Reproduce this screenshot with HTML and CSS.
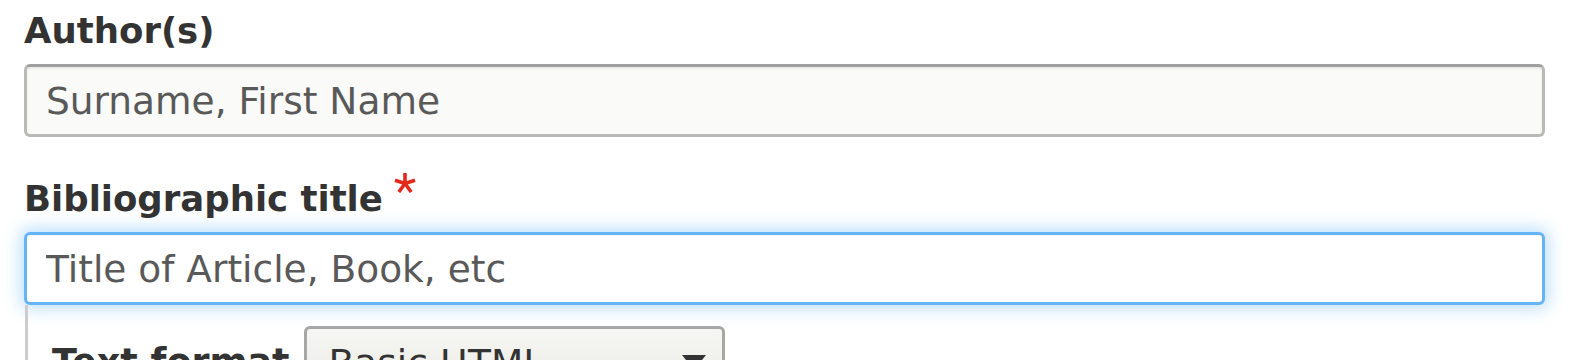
FILE: index.html
```html
<!DOCTYPE html>
<html lang="en">
<head>
<meta charset="utf-8">
<title>Bibliographic form</title>
<link rel="stylesheet" href="styles.css">
</head>
<body>
<form class="form">
  <div class="item">
    <label class="label" for="author">Author(s)</label>
    <input class="input" id="author" type="text" placeholder="Surname, First Name">
  </div>
  <div class="item">
    <label class="label" for="title">Bibliographic title<svg class="req" width="22" height="20" viewBox="0 0 22 20" aria-hidden="true"><g stroke="#e2291b" stroke-width="3.6" stroke-linecap="butt"><line x1="11" y1="10.5" x2="11" y2="0"/><line x1="11" y1="10.5" x2="1" y2="7.3"/><line x1="11" y1="10.5" x2="21" y2="7.3"/><line x1="11" y1="10.5" x2="4.8" y2="19"/><line x1="11" y1="10.5" x2="17.2" y2="19"/></g></svg></label>
    <input class="input focus" id="title" type="text" placeholder="Title of Article, Book, etc">
    <div class="filter-wrapper">
      <div class="filter-row">
        <span class="label filter-label">Text format</span>
        <div class="select"><span>Basic HTML</span><span class="arrow"></span></div>
      </div>
    </div>
  </div>
</form>
</body>
</html>
```

FILE: styles.css
```css
html, body {
  margin: 0;
  background: #fff;
}
body {
  padding: 11px 37px 0 24px;
  font-family: "DejaVu Sans", "Noto Sans", sans-serif;
  height: 360px;
  box-sizing: border-box;
  overflow: hidden;
}
.form {
  margin: 0;
}
.item + .item {
  margin-top: 42px;
}
.label {
  display: block;
  font-weight: bold;
  font-size: 35.5px;
  line-height: 40px;
  color: #333;
  margin-bottom: 13px;
}
.req {
  display: inline-block;
  vertical-align: 18px;
  margin-top: -10px;
  margin-left: 11px;
}
.input {
  display: block;
  width: 100%;
  box-sizing: border-box;
  height: 73px;
  margin: 0;
  padding: 0 19px;
  border: 3px solid #b9b9b9;
  border-top-color: #9f9f9f;
  border-radius: 6px;
  background: #fafaf8;
  box-shadow: inset 0 2px 3px rgba(0, 0, 0, 0.07);
  font-family: "DejaVu Sans", "Noto Sans", sans-serif;
  font-size: 37.5px;
  color: #595959;
  outline: none;
}
.input::placeholder {
  color: #595959;
  opacity: 1;
}
.input.focus {
  background: #fff;
  border-color: #66b4f7;
  box-shadow: inset 0 1px 2px rgba(0, 0, 0, 0.05), 0 0 16px 4px rgba(102, 180, 247, 0.42);
}
.filter-wrapper {
  margin-left: 1px;
  border-left: 3px solid #cccccc;
  padding: 21px 0 0 24px;
}
.filter-row {
  display: flex;
  align-items: center;
  gap: 14px;
}
.filter-label {
  margin: 0;
  font-size: 36.5px;
}
.select {
  box-sizing: border-box;
  width: 421px;
  height: 73px;
  border: 3px solid #a7a7a7;
  border-radius: 6px;
  background: linear-gradient(#f6f6f3, #e9e9e4);
  padding: 0 16px 0 22px;
  display: flex;
  align-items: center;
  justify-content: space-between;
  font-size: 37.5px;
  color: #333;
}
.arrow {
  width: 0;
  height: 0;
  border-left: 12.5px solid transparent;
  border-right: 12.5px solid transparent;
  border-top: 15px solid #333;
}
```
